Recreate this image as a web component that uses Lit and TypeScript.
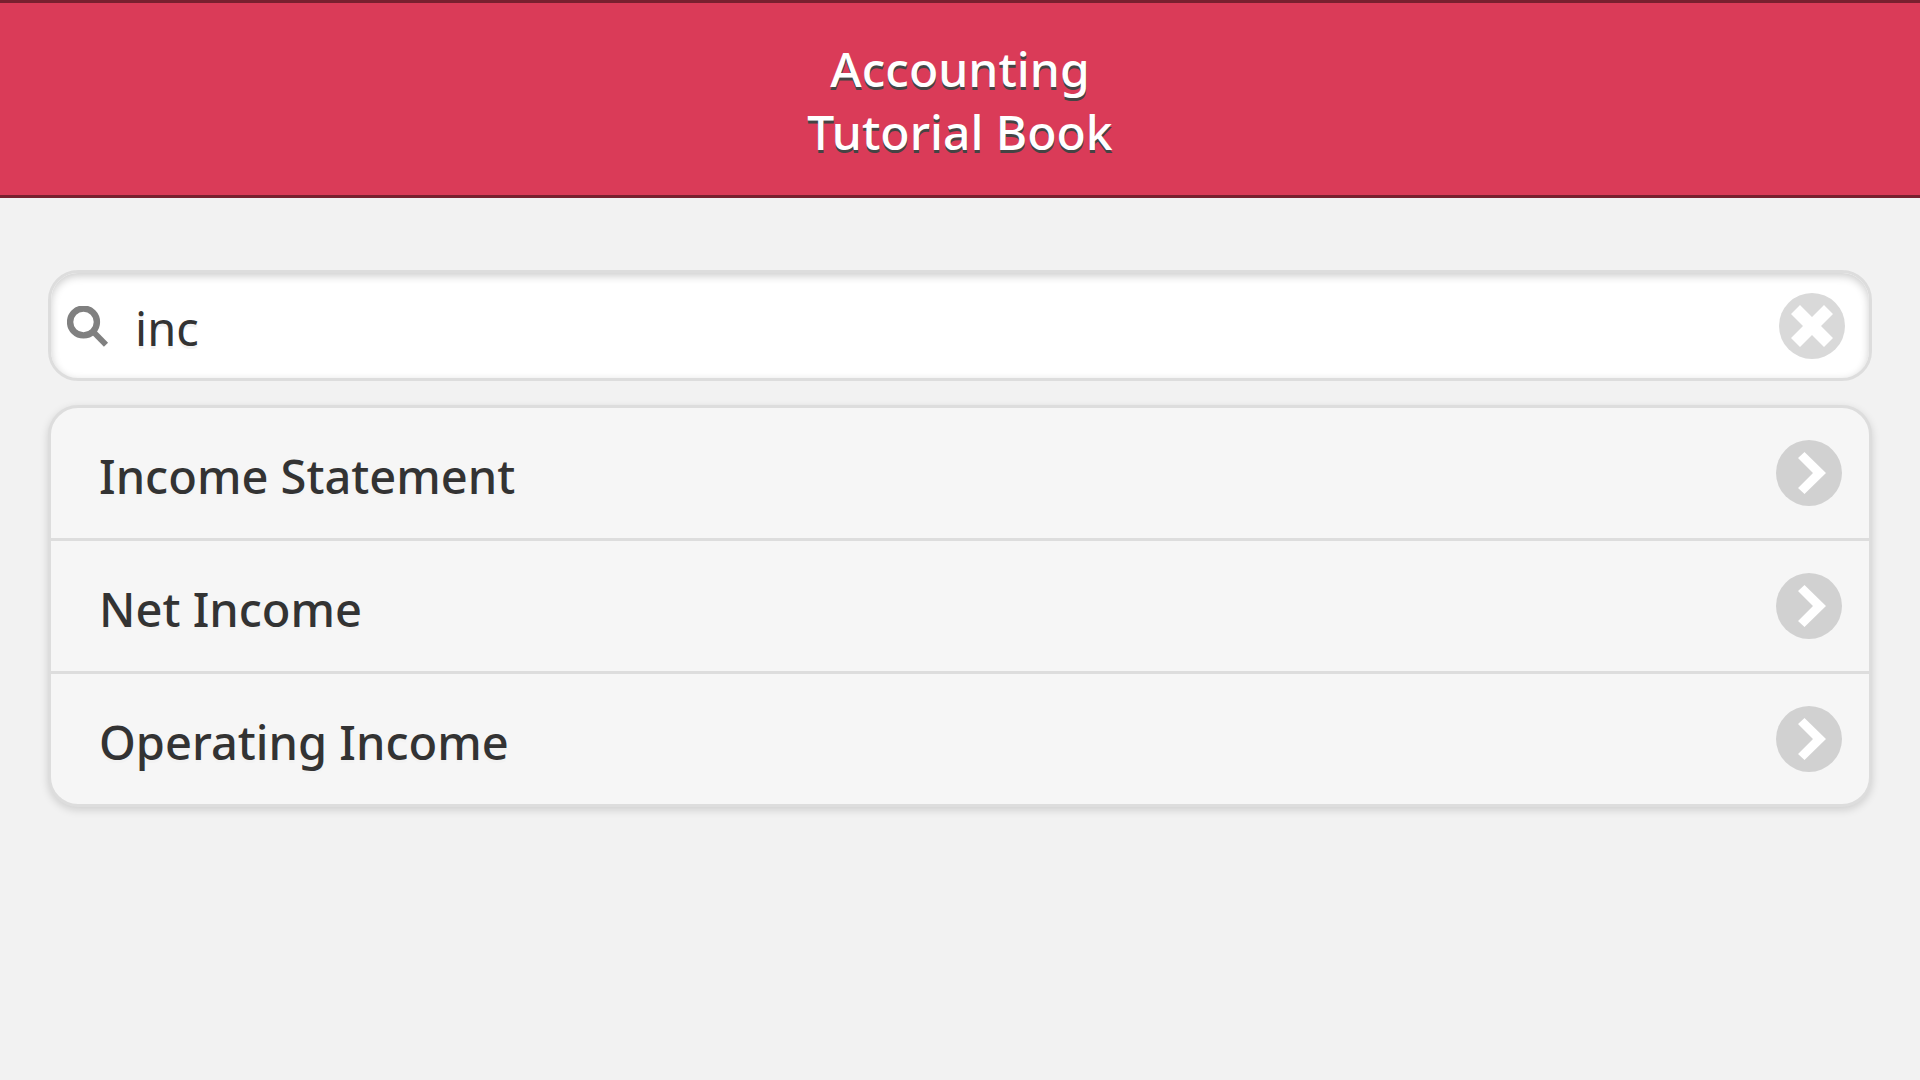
import { LitElement, html, css, svg } from "lit";
import { customElement, state } from "lit/decorators.js";

const ENTRIES = ["Income Statement", "Net Income", "Operating Income"];

const searchIcon = svg`<svg class="glass" viewBox="0 0 42 42" aria-hidden="true">
  <circle cx="16.5" cy="16" r="13.4" fill="none" stroke="#808080" stroke-width="6.4"/>
  <path d="M26 25.4 39 38.8" stroke="#808080" stroke-width="5.8"/>
</svg>`;

const clearIcon = svg`<svg class="disc" viewBox="0 0 66 66" aria-hidden="true">
  <circle cx="33" cy="33" r="33" fill="#d9d9d9"/>
  <path d="M21 12 33 24 45 12 54 21 42 33 54 45 45 54 33 42 21 54 12 45 24 33 12 21Z" fill="#fff"/>
</svg>`;

const chevronIcon = svg`<svg class="disc" viewBox="0 0 66 66" aria-hidden="true">
  <circle cx="33" cy="33" r="33" fill="#d1d1d1"/>
  <path d="M28.5 12 50 33 28.5 54 22 48 37 33 22 18Z" fill="#fff"/>
</svg>`;

@customElement("app-root")
export class AppRoot extends LitElement {
  static styles = css`
    :host {
      display: block;
      min-height: 100vh;
      background: #f2f2f2;
      color: #333;
      font: 400 47px/60px "Noto Sans", "Open Sans", sans-serif;
    }
    * {
      box-sizing: border-box;
    }
    .header {
      padding: 34px 48px 32px;
      border: solid #78202f;
      border-width: 3px 0;
      background: #da3b58;
      color: #fff;
      text-align: center;
      text-shadow: 0 3px 0 #444;
    }
    .title {
      margin: 0;
      font-size: 48px;
      font-weight: 500;
      line-height: 63px;
    }
    .content {
      display: flex;
      flex-direction: column;
      gap: 24px;
      padding: 72px 48px 48px;
    }
    .search {
      display: flex;
      align-items: center;
      min-height: 111px;
      padding: 0 24px 0 16px;
      border: 3px solid #ddd;
      border-radius: 30px;
      background: #fff;
      box-shadow: inset 0 3px 9px rgba(0, 0, 0, 0.2);
    }
    .glass {
      display: block;
      width: 42px;
      height: 42px;
      margin-top: 2px;
      flex: none;
    }
    .field {
      flex: 1;
      min-width: 0;
      margin: 0;
      padding: 4px 26px 0;
      border: 0;
      outline: 0;
      background: transparent;
      color: inherit;
      font: inherit;
      text-shadow: 0 3px 0 #f3f3f3;
    }
    .clear {
      display: block;
      flex: none;
      padding: 0;
      border: 0;
      border-radius: 50%;
      background: none;
    }
    .disc {
      display: block;
      width: 66px;
      height: 66px;
      flex: none;
    }
    .list {
      margin: 0;
      padding: 0;
      list-style: none;
      border: 3px solid #ddd;
      border-radius: 30px;
      background: #f6f6f6;
      box-shadow: 0 3px 9px rgba(0, 0, 0, 0.15);
    }
    .item + .item {
      border-top: 3px solid #ddd;
    }
    .link {
      display: flex;
      align-items: center;
      justify-content: space-between;
      padding: 32px 27px 32px 48px;
      color: inherit;
      font-weight: 500;
      text-decoration: none;
      text-shadow: 0 3px 0 #f3f3f3;
    }
    .name {
      padding-top: 5px;
    }
  `;

  @state() private query = "inc";

  render() {
    const q = this.query.trim().toLowerCase();
    const shown = ENTRIES.filter((e) => e.toLowerCase().includes(q));
    return html`
      <header class="header">
        <h1 class="title">Accounting<br />Tutorial Book</h1>
      </header>
      <main class="content">
        <label class="search">
          ${searchIcon}
          <input
            class="field"
            type="text"
            aria-label="Search"
            .value=${this.query}
            @input=${(e: Event) => (this.query = (e.target as HTMLInputElement).value)}
          />
          <button class="clear" type="button" aria-label="Clear text" @click=${() => (this.query = "")}>
            ${clearIcon}
          </button>
        </label>
        <ul class="list">
          ${shown.map(
            (name) => html`<li class="item">
              <a class="link" href="#"><span class="name">${name}</span>${chevronIcon}</a>
            </li>`
          )}
        </ul>
      </main>
    `;
  }
}
